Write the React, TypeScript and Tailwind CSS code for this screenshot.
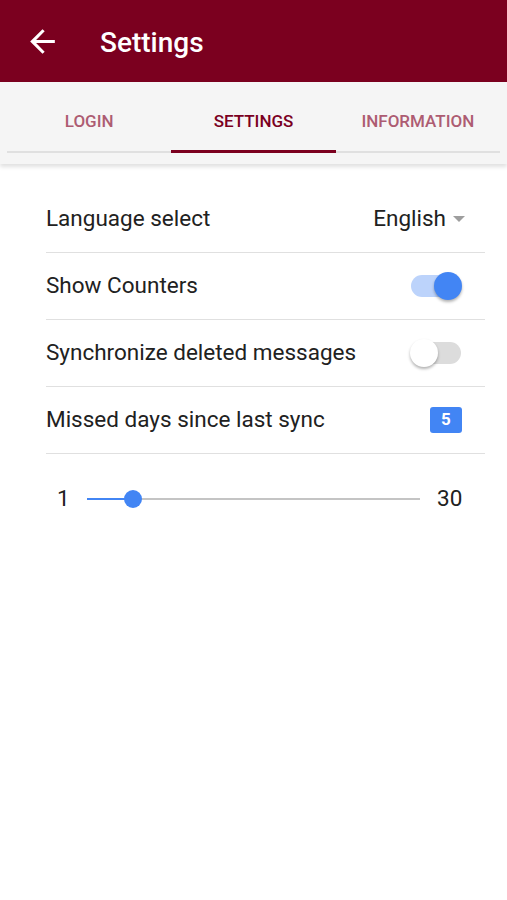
import React from "react";

function Toggle({ on }: { on: boolean }) {
  return (
    <div className="relative w-[52px] h-[30px] flex items-center">
      <div
        className={
          "absolute left-[1px] right-[1px] h-[22px] rounded-full " +
          (on ? "bg-[#bcd3fb]" : "bg-[#dcdcdc]")
        }
      />
      <div
        className={
          "absolute w-[28px] h-[28px] rounded-full shadow-[0_2px_3px_rgba(0,0,0,0.3)] " +
          (on ? "right-[0px] bg-[#4285f4]" : "left-[0px] bg-white")
        }
      />
    </div>
  );
}

export default function App() {
  return (
    <div
      className="w-[507px] h-[900px] bg-white text-[#212121]"
      style={{ fontFamily: "Roboto, 'Noto Sans', sans-serif" }}
    >
      <div className="h-[82px] bg-[#7b001f] flex items-center">
        <svg
          className="ml-[24px]"
          width="37"
          height="37"
          viewBox="0 0 24 24"
          fill="white"
        >
          <path d="M20 11H7.83l5.59-5.59L12 4l-8 8 8 8 1.41-1.41L7.83 13H20v-2z" />
        </svg>
        <div className="ml-[39px] mt-[3px] text-white text-[28px] font-medium leading-none">
          Settings
        </div>
      </div>
      <div className="relative bg-[#f5f5f5] h-[82px] px-[7px] shadow-[0_3px_4px_rgba(0,0,0,0.12)]">
        <div className="flex h-[71px] border-b-2 border-[#e0e0e0]">
          {["LOGIN", "SETTINGS", "INFORMATION"].map((t, i) => (
            <div key={t} className="relative flex-1 flex justify-center">
              <div
                className={
                  "mt-[29px] text-[17px] leading-[20px] font-medium " +
                  (i === 1 ? "text-[#7b001f]" : "text-[#ad5c72]")
                }
              >
                {t}
              </div>
              {i === 1 && (
                <div className="absolute left-[0px] right-[0px] -bottom-[2px] h-[3px] bg-[#7b001f]" />
              )}
            </div>
          ))}
        </div>
      </div>
      <div className="pt-[22px] pl-[46px] pr-[22px]">
        <div className="h-[67px] flex items-center justify-between border-b border-[#e0e0e0]">
          <span className="text-[22.5px]">Language select</span>
          <div className="flex items-center pr-[19px]">
            <span className="text-[22.5px]">English</span>
            <svg className="ml-[6px]" width="14" height="8" viewBox="0 0 14 8">
              <path d="M1 1h12L7 7z" fill="#9e9e9e" />
            </svg>
          </div>
        </div>
        <div className="h-[67px] flex items-center justify-between border-b border-[#e0e0e0]">
          <span className="text-[22.5px]">Show Counters</span>
          <div className="pr-[23px]">
            <Toggle on={true} />
          </div>
        </div>
        <div className="h-[67px] flex items-center justify-between border-b border-[#e0e0e0]">
          <span className="text-[22.5px]">Synchronize deleted messages</span>
          <div className="pr-[23px]">
            <Toggle on={false} />
          </div>
        </div>
        <div className="h-[67px] flex items-center justify-between border-b border-[#e0e0e0]">
          <span className="text-[22.5px]">Missed days since last sync</span>
          <div className="mr-[23px] w-[32px] h-[26px] rounded-[3px] bg-[#4285f4] text-white font-bold text-[17px] flex items-center justify-center">
            5
          </div>
        </div>
        <div className="h-[90px] flex items-center">
          <span className="ml-[11px] w-[12px] text-[22.5px]">1</span>
          <div className="relative ml-[18px] w-[333px] h-[18px] flex items-center">
            <div className="absolute left-0 right-0 h-[2px] bg-[#c4c4c4]" />
            <div className="absolute left-0 w-[46px] h-[2px] bg-[#4285f4]" />
            <div className="absolute left-[37px] w-[18px] h-[18px] rounded-full bg-[#4285f4]" />
          </div>
          <span className="ml-[17px] text-[22.5px]">30</span>
        </div>
      </div>
    </div>
  );
}
